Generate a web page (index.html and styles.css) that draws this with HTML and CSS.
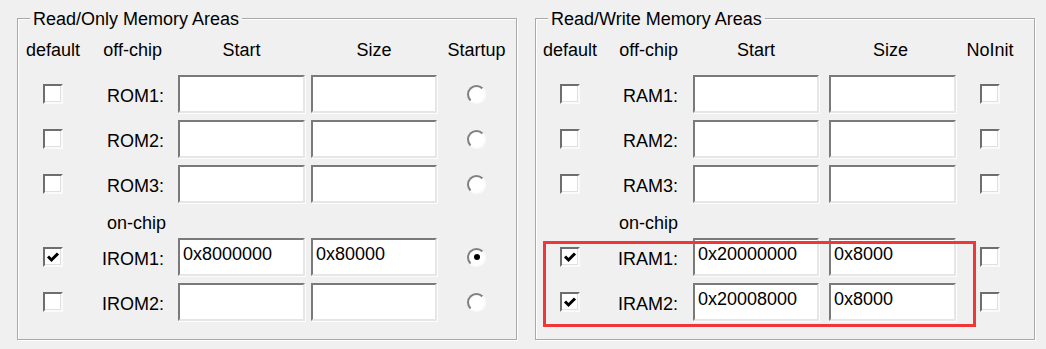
FILE: index.html
```html
<!DOCTYPE html>
<html>
<head>
<meta charset="utf-8">
<link rel="stylesheet" href="styles.css">
</head>
<body>
<div class="group">
  <span class="legend">Read/Only Memory Areas</span>
  <div class="grid grid-ro">
    <div class="hd">default</div><div class="hd hd-r">off-chip</div><div class="hd">Start</div><div class="hd hd-size">Size</div><div class="hd">Startup</div>

    <div class="cell c"><span class="chk"></span></div><div class="cell lbl">ROM1:</div><div class="cell"><input class="field" type="text" value=""></div><div class="cell e"><input class="field f2" type="text" value=""></div><div class="cell c"><span class="radio"></span></div>

    <div class="cell c"><span class="chk"></span></div><div class="cell lbl">ROM2:</div><div class="cell"><input class="field" type="text" value=""></div><div class="cell e"><input class="field f2" type="text" value=""></div><div class="cell c"><span class="radio"></span></div>

    <div class="cell c"><span class="chk"></span></div><div class="cell lbl">ROM3:</div><div class="cell"><input class="field" type="text" value=""></div><div class="cell e"><input class="field f2" type="text" value=""></div><div class="cell c"><span class="radio"></span></div>

    <div></div><div class="sub">on-chip</div><div></div><div></div><div></div>

    <div class="cell c"><span class="chk on"><svg viewBox="0 0 16 16" width="16" height="16"><polyline points="3,7.5 6.5,11 13,4.5" fill="none" stroke="#000" stroke-width="3"/></svg></span></div><div class="cell lbl">IROM1:</div><div class="cell"><input class="field" type="text" value="0x8000000"></div><div class="cell e"><input class="field f2" type="text" value="0x80000"></div><div class="cell c"><span class="radio sel"></span></div>

    <div class="cell c"><span class="chk"></span></div><div class="cell lbl">IROM2:</div><div class="cell"><input class="field" type="text" value=""></div><div class="cell e"><input class="field f2" type="text" value=""></div><div class="cell c"><span class="radio"></span></div>
  </div>
</div>

<div class="group">
  <span class="legend">Read/Write Memory Areas</span>
  <div class="grid grid-rw">
    <div class="hd">default</div><div class="hd hd-r">off-chip</div><div class="hd">Start</div><div class="hd hd-size">Size</div><div class="hd">NoInit</div>

    <div class="cell c"><span class="chk"></span></div><div class="cell lbl">RAM1:</div><div class="cell"><input class="field" type="text" value=""></div><div class="cell e"><input class="field f2" type="text" value=""></div><div class="cell c"><span class="chk"></span></div>

    <div class="cell c"><span class="chk"></span></div><div class="cell lbl">RAM2:</div><div class="cell"><input class="field" type="text" value=""></div><div class="cell e"><input class="field f2" type="text" value=""></div><div class="cell c"><span class="chk"></span></div>

    <div class="cell c"><span class="chk"></span></div><div class="cell lbl">RAM3:</div><div class="cell"><input class="field" type="text" value=""></div><div class="cell e"><input class="field f2" type="text" value=""></div><div class="cell c"><span class="chk"></span></div>

    <div></div><div class="sub">on-chip</div><div></div><div></div><div></div>

    <div class="cell c"><span class="chk on"><svg viewBox="0 0 16 16" width="16" height="16"><polyline points="3,7.5 6.5,11 13,4.5" fill="none" stroke="#000" stroke-width="3"/></svg></span></div><div class="cell lbl">IRAM1:</div><div class="cell"><input class="field" type="text" value="0x20000000"></div><div class="cell e"><input class="field f2" type="text" value="0x8000"></div><div class="cell c"><span class="chk"></span></div>

    <div class="cell c"><span class="chk on"><svg viewBox="0 0 16 16" width="16" height="16"><polyline points="3,7.5 6.5,11 13,4.5" fill="none" stroke="#000" stroke-width="3"/></svg></span></div><div class="cell lbl">IRAM2:</div><div class="cell"><input class="field" type="text" value="0x20008000"></div><div class="cell e"><input class="field f2" type="text" value="0x8000"></div><div class="cell c"><span class="chk"></span></div>
  </div>
  <div class="highlight"></div>
</div>
</body>
</html>
```

FILE: styles.css
```css
html, body {
  margin: 0;
  padding: 0;
}
body {
  background: #f0f0f0;
  font-family: "Liberation Sans", Arial, sans-serif;
  font-size: 18px;
  color: #000;
  display: flex;
  gap: 18px;
  padding: 18px 0 0 17px;
  width: 1046px;
  height: 349px;
  box-sizing: border-box;
  overflow: hidden;
}
.group {
  position: relative;
  width: 500px;
  height: 322px;
  box-sizing: border-box;
  border: 1px solid #a9a9a9;
  box-shadow: inset 1px 1px 0 #fff, 1px 1px 0 #fff;
}
.legend {
  position: absolute;
  left: 12px;
  top: -11px;
  padding: 0 3px;
  line-height: 22px;
  background: #f0f0f0;
}
.grid {
  display: grid;
  grid-template-rows: 37px 45px 45px 45px 28px 45px 38px;
  padding: 19px 0 0 5px;
}
.grid-ro {
  grid-template-columns: 60px 95px 127px 132px 79px;
}
.grid-rw {
  grid-template-columns: 58px 94px 126px 137px 68px;
}
.grid-rw .lbl, .grid-rw .hd-r, .grid-rw .sub {
  padding-right: 15px;
}
.hd {
  line-height: 24px;
  text-align: center;
  white-space: nowrap;
  align-self: start;
}
.hd-r {
  text-align: right;
  padding-right: 16px;
}
.hd-size {
  padding-left: 6px;
}
.cell {
  height: 38px;
  display: flex;
  align-items: center;
  align-self: start;
}
.cell.c {
  justify-content: center;
}
.cell.e {
  justify-content: flex-end;
}
.lbl {
  justify-content: flex-end;
  padding-right: 14px;
  padding-top: 4px;
  box-sizing: border-box;
  white-space: nowrap;
}
.sub {
  align-self: end;
  text-align: right;
  padding-right: 12px;
  line-height: 24px;
  padding-bottom: 3px;
  white-space: nowrap;
}
.field {
  width: 127px;
  height: 38px;
  box-sizing: border-box;
  margin: 0;
  border: 2px solid;
  border-color: #7a7a7a #e6e6e6 #e6e6e6 #7a7a7a;
  box-shadow: 1px 1px 0 #fdfdfd;
  background: #fff;
  font-family: "Liberation Sans", Arial, sans-serif;
  font-size: 18px;
  color: #000;
  padding: 3px 3px 9px 3px;
  outline: none;
}
.grid-rw .field {
  width: 126px;
}
.grid-rw .field.f2 {
  width: 127px;
}
.grid-ro .field.f2 {
  width: 126px;
}
.chk {
  width: 20px;
  height: 20px;
  box-sizing: border-box;
  border: 2px solid;
  border-color: #6e6e6e #fafafa #fafafa #6e6e6e;
  box-shadow: inset -1px -1px 0 #e0e0e0, 0 0 0 0 transparent;
  background: #fff;
  display: flex;
  align-items: center;
  justify-content: center;
}
.radio {
  width: 19px;
  height: 19px;
  box-sizing: border-box;
  border-radius: 50%;
  border: 2px solid;
  border-color: #808080 #fbfbfb #fbfbfb #808080;
  background: #fff;
  display: flex;
  align-items: center;
  justify-content: center;
}
.radio.sel::after {
  content: "";
  width: 6px;
  height: 6px;
  border-radius: 50%;
  background: #000;
}
.highlight {
  position: absolute;
  left: 7px;
  top: 222px;
  width: 433px;
  height: 86px;
  box-sizing: border-box;
  border: 3px solid #f03737;
  pointer-events: none;
}
```
